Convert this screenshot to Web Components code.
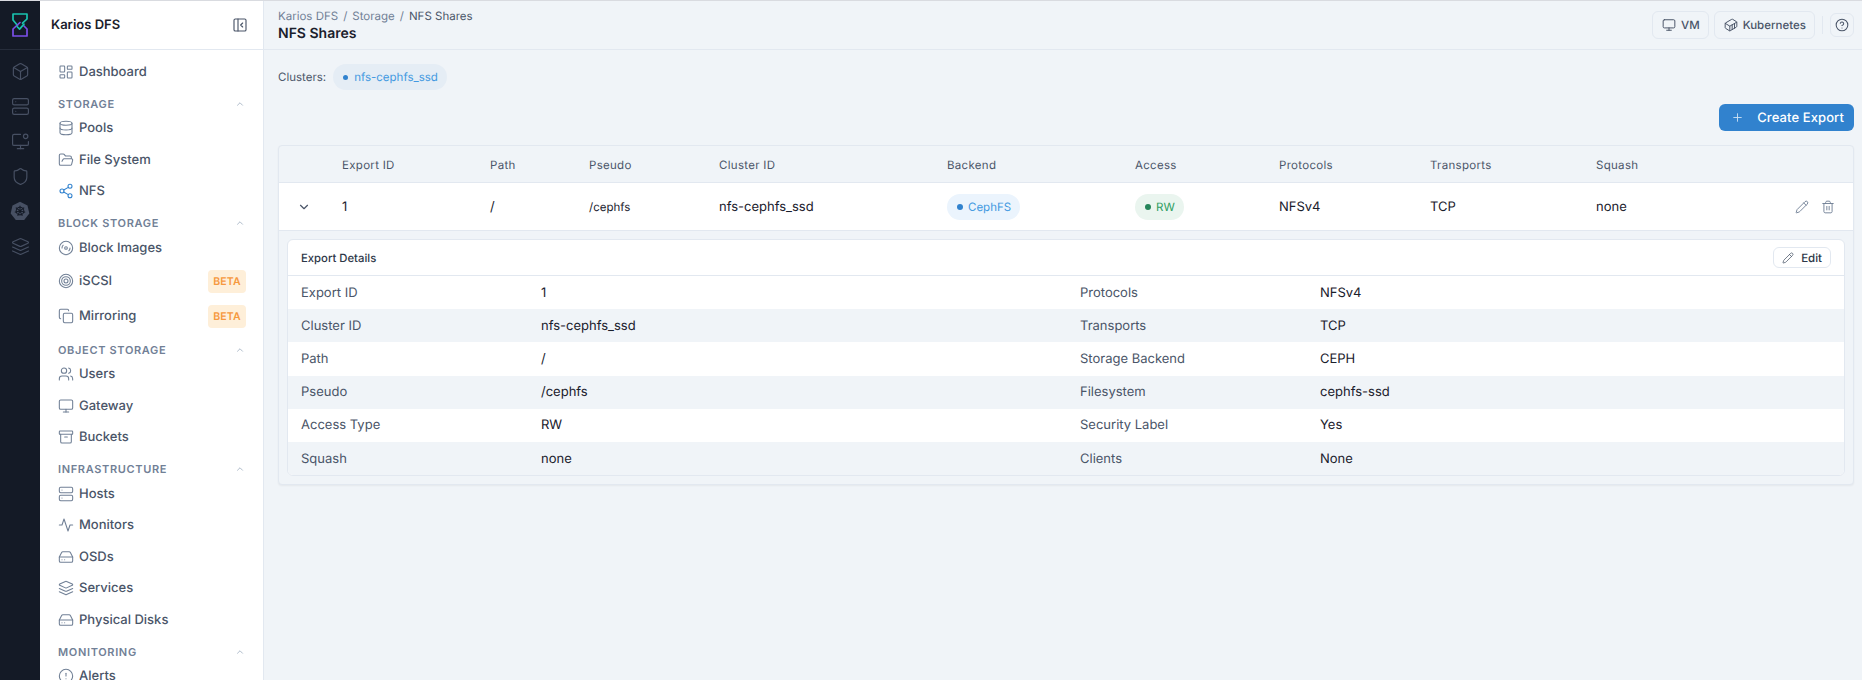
<!DOCTYPE html>
<html lang="en">
<head>
<meta charset="utf-8">
<title>NFS Shares</title>
<style>
  html, body { margin: 0; height: 100%; overflow: hidden; background: #f0f4f8; }
  body { font-family: Inter, "Liberation Sans", sans-serif; color: #1a202c; text-rendering: geometricPrecision; }
</style>
</head>
<body>
<kd-app>
  <kd-rail slot="rail"></kd-rail>
  <kd-sidebar slot="sidebar" title="Karios DFS">
    <kd-item icon="dashboard">Dashboard</kd-item>
    <kd-section>Storage</kd-section>
    <kd-item icon="database">Pools</kd-item>
    <kd-item icon="folder">File System</kd-item>
    <kd-item icon="share" active>NFS</kd-item>
    <kd-section>Block Storage</kd-section>
    <kd-item icon="disc">Block Images</kd-item>
    <kd-item icon="target" badge="BETA">iSCSI</kd-item>
    <kd-item icon="copy" badge="BETA">Mirroring</kd-item>
    <kd-section>Object Storage</kd-section>
    <kd-item icon="users">Users</kd-item>
    <kd-item icon="monitor">Gateway</kd-item>
    <kd-item icon="archive">Buckets</kd-item>
    <kd-section>Infrastructure</kd-section>
    <kd-item icon="server">Hosts</kd-item>
    <kd-item icon="activity">Monitors</kd-item>
    <kd-item icon="drive">OSDs</kd-item>
    <kd-item icon="layers">Services</kd-item>
    <kd-item icon="drive">Physical Disks</kd-item>
    <kd-section>Monitoring</kd-section>
    <kd-item icon="alert">Alerts</kd-item>
  </kd-sidebar>
  <kd-header slot="header" title="NFS Shares"></kd-header>
  <kd-clusters>nfs-cephfs_ssd</kd-clusters>
  <kd-toolbar>Create Export</kd-toolbar>
  <kd-exports>
    <kd-details title="Export Details">
      <kd-detail-row l1="Export ID" v1="1" l2="Protocols" v2="NFSv4"></kd-detail-row>
      <kd-detail-row striped l1="Cluster ID" v1="nfs-cephfs_ssd" l2="Transports" v2="TCP"></kd-detail-row>
      <kd-detail-row l1="Path" v1="/" l2="Storage Backend" v2="CEPH"></kd-detail-row>
      <kd-detail-row striped l1="Pseudo" v1="/cephfs" l2="Filesystem" v2="cephfs-ssd"></kd-detail-row>
      <kd-detail-row l1="Access Type" v1="RW" l2="Security Label" v2="Yes"></kd-detail-row>
      <kd-detail-row striped l1="Squash" v1="none" l2="Clients" v2="None"></kd-detail-row>
    </kd-details>
  </kd-exports>
</kd-app>

<script>
  const ICONS = {
    box: '<path d="M21 8a2 2 0 0 0-1-1.73l-7-4a2 2 0 0 0-2 0l-7 4A2 2 0 0 0 3 8v8a2 2 0 0 0 1 1.73l7 4a2 2 0 0 0 2 0l7-4A2 2 0 0 0 21 16Z"/><path d="m3.3 7 8.7 5 8.7-5"/><path d="M12 22V12"/>',
    server: '<rect x="2" y="2" width="20" height="8" rx="2"/><rect x="2" y="14" width="20" height="8" rx="2"/><path d="M6 6h.01"/><path d="M6 18h.01"/>',
    monitorcog: '<path d="M12 3H4a2 2 0 0 0-2 2v10a2 2 0 0 0 2 2h16a2 2 0 0 0 2-2v-3"/><circle cx="18.5" cy="5.5" r="2.8"/><path d="M12 17v4"/><path d="M8 21h8"/>',
    shield: '<path d="M20 13c0 5-3.5 7.5-7.66 8.95a1 1 0 0 1-.67-.01C7.5 20.5 4 18 4 13V6a1 1 0 0 1 1-1c2 0 4.5-1.2 6.24-2.72a1.17 1.17 0 0 1 1.52 0C14.51 3.81 17 5 19 5a1 1 0 0 1 1 1z"/>',
    layers: '<path d="M12.83 2.18a2 2 0 0 0-1.66 0L2.6 6.08a1 1 0 0 0 0 1.83l8.58 3.91a2 2 0 0 0 1.66 0l8.58-3.9a1 1 0 0 0 0-1.83Z"/><path d="m22 17.65-9.17 4.16a2 2 0 0 1-1.66 0L2 17.65"/><path d="m22 12.65-9.17 4.16a2 2 0 0 1-1.66 0L2 12.65"/>',
    dashboard: '<rect x="3" y="3" width="7" height="9" rx="1"/><rect x="14" y="3" width="7" height="5" rx="1"/><rect x="14" y="12" width="7" height="9" rx="1"/><rect x="3" y="16" width="7" height="5" rx="1"/>',
    database: '<ellipse cx="12" cy="5" rx="9" ry="3"/><path d="M3 5v14a9 3 0 0 0 18 0V5"/><path d="M3 12a9 3 0 0 0 18 0"/>',
    folder: '<path d="m6 14 1.5-2.9A2 2 0 0 1 9.24 10H20a2 2 0 0 1 1.94 2.5l-1.54 6a2 2 0 0 1-1.95 1.5H4a2 2 0 0 1-2-2V5a2 2 0 0 1 2-2h3.9a2 2 0 0 1 1.69.9l.81 1.2a2 2 0 0 0 1.67.9H18a2 2 0 0 1 2 2v2"/>',
    share: '<circle cx="18" cy="5" r="3"/><circle cx="6" cy="12" r="3"/><circle cx="18" cy="19" r="3"/><path d="m8.59 13.51 6.83 3.98"/><path d="m15.41 6.51-6.82 3.98"/>',
    disc: '<circle cx="12" cy="12" r="10"/><path d="M6 12c0-1.7.7-3.2 1.8-4.2"/><circle cx="12" cy="12" r="2"/><path d="M18 12c0 1.7-.7 3.2-1.8 4.2"/>',
    target: '<circle cx="12" cy="12" r="10"/><circle cx="12" cy="12" r="6.5"/><circle cx="12" cy="12" r="3"/>',
    copy: '<rect x="8" y="8" width="14" height="14" rx="2"/><path d="M4 16c-1.1 0-2-.9-2-2V4c0-1.1.9-2 2-2h10c1.1 0 2 .9 2 2"/>',
    users: '<path d="M16 21v-2a4 4 0 0 0-4-4H6a4 4 0 0 0-4 4v2"/><circle cx="9" cy="7" r="4"/><path d="M22 21v-2a4 4 0 0 0-3-3.87"/><path d="M16 3.13a4 4 0 0 1 0 7.75"/>',
    monitor: '<rect x="2" y="3" width="20" height="14" rx="2"/><path d="M8 21h8"/><path d="M12 17v4"/>',
    archive: '<rect x="2" y="3" width="20" height="5" rx="1"/><path d="M4 8v11a2 2 0 0 0 2 2h12a2 2 0 0 0 2-2V8"/><path d="M10 12h4"/>',
    activity: '<path d="M22 12h-4l-3 9L9 3l-3 9H2"/>',
    drive: '<path d="M22 12H2"/><path d="M5.45 5.11 2 12v6a2 2 0 0 0 2 2h16a2 2 0 0 0 2-2v-6l-3.45-6.89A2 2 0 0 0 16.76 4H7.24a2 2 0 0 0-1.79 1.11z"/><path d="M6 16h.01"/><path d="M10 16h.01"/>',
    alert: '<circle cx="12" cy="12" r="10"/><path d="M12 8v4"/><path d="M12 16h.01"/>',
    up: '<path d="m18 15-6-6-6 6"/>',
    down: '<path d="m6 9 6 6 6-6"/>',
    plus: '<path d="M5 12h14"/><path d="M12 5v14"/>',
    pencil: '<path d="M21.174 6.812a1 1 0 0 0-3.986-3.987L3.842 16.174a2 2 0 0 0-.5.83l-1.321 4.352a.5.5 0 0 0 .623.622l4.353-1.32a2 2 0 0 0 .83-.497z"/><path d="m15 5 4 4"/>',
    trash: '<path d="M3 6h18"/><path d="M19 6v14c0 1-1 2-2 2H7c-1 0-2-1-2-2V6"/><path d="M8 6V4c0-1 1-2 2-2h4c1 0 2 1 2 2v2"/><path d="M10 11v6"/><path d="M14 11v6"/>',
    help: '<circle cx="12" cy="12" r="10"/><path d="M9.09 9a3 3 0 0 1 5.83 1c0 2-3 3-3 3"/><path d="M12 17h.01"/>',
    panel: '<rect x="3" y="3" width="18" height="18" rx="2"/><path d="M9 3v18"/><path d="m16 15-3-3 3-3"/>',
    container: '<path d="M22 7.7c0-.6-.4-1.2-.8-1.5l-6.3-3.9a1.72 1.72 0 0 0-1.7 0l-10.3 6c-.5.2-.9.8-.9 1.4v6.6c0 .5.4 1.2.8 1.5l6.3 3.9a1.72 1.72 0 0 0 1.7 0l10.3-6c.5-.3.9-1 .9-1.5Z"/><path d="M10 21.9V14L2.1 9.1"/><path d="m10 14 11.9-6.9"/><path d="M14 19.8v-8.1"/><path d="M18 17.5V9.4"/>'
  };

  function icon(name, size, width = 2) {
    return `<svg width="${size}" height="${size}" viewBox="0 0 24 24" fill="none" stroke="currentColor" stroke-width="${width}" stroke-linecap="round" stroke-linejoin="round" style="display:block;flex:none">${ICONS[name]}</svg>`;
  }

  class KdApp extends HTMLElement {
    constructor() {
      super();
      this.attachShadow({ mode: "open" }).innerHTML = `
      <style>
        :host { display: grid; grid-template-columns: 40px 224px 1fr; height: 680px; box-sizing: border-box; border-top: 1px solid #d9dbe0; overflow: hidden; }
        main { display: flex; flex-direction: column; min-width: 0; background: #f0f4f8; }
        .content { display: flex; flex-direction: column; gap: 14px; padding: 14px 8px 0 14px; }
      </style>
      <slot name="rail"></slot>
      <slot name="sidebar"></slot>
      <main>
        <slot name="header"></slot>
        <div class="content"><slot></slot></div>
      </main>`;
    }
  }

  class KdRail extends HTMLElement {
    constructor() {
      super();
      const items = ["box", "server", "monitorcog", "shield", "k8s", "layers"];
      const wheel = [0, 51.4, 102.8, 154.2, 205.6, 257, 308.4]
        .map(a => `<path d="M12 12V5.6" transform="rotate(${a} 12 12)"/>`).join("");
      const k8s = `<svg width="20" height="20" viewBox="0 0 24 24" style="display:block;flex:none"><path d="M12 1 21 5.3 23.2 15 17 22.8H7L.8 15 3 5.3z" fill="#475063"/><g fill="none" stroke="#141a26" stroke-width="1.3"><circle cx="12" cy="12" r="4.6"/>${wheel}</g></svg>`;
      this.attachShadow({ mode: "open" }).innerHTML = `
      <style>
        :host { display: flex; flex-direction: column; background: #141a26; color: #475063; }
        .logo { height: 48px; flex: none; display: flex; align-items: center; justify-content: center; border-bottom: 1px solid #262d3b; }
        nav { display: flex; flex-direction: column; align-items: center; padding-top: 11.5px; gap: 16px; }
        nav span { height: 19px; width: 22px; display: flex; justify-content: center; align-items: center; }
      </style>
      <div class="logo">
        <svg width="16" height="24" viewBox="0 0 16 24" fill="none" stroke-width="1.7" stroke-linejoin="round" stroke-linecap="round">
          <path d="M1 1h14v5l-4.5 4.2M5.5 12.5 1 7V1" stroke="#19c2ae"/>
          <path d="M8 9.5 1 16v7h14v-7l-3-3" stroke="#7a4fe8"/>
          <path d="m5 13.5 2.6 2.6 4.4-5" stroke="#19c2ae"/>
        </svg>
      </div>
      <nav>${items.map(n => `<span>${n === "k8s" ? k8s : icon(n, 19, 1.5)}</span>`).join("")}</nav>`;
    }
  }

  class KdSidebar extends HTMLElement {
    constructor() {
      super();
      const shadow = this.attachShadow({ mode: "open" });
      shadow.innerHTML = `
      <style>
        :host { display: flex; flex-direction: column; background: #fff; border-right: 1px solid #e2e8f0; overflow: hidden; }
        header { height: 48px; flex: none; display: flex; align-items: center; justify-content: space-between; padding: 0 15px 0 11px; border-bottom: 1px solid #e2e8f0; }
        h1 { margin: 0; font-size: 13px; font-weight: 600; color: #1a202c; }
        header span { color: #4a5568; }
        .nav { padding: 6px 17px 0 18px; }
      </style>
      <header><h1></h1><span>${icon("panel", 16, 1.7)}</span></header>
      <div class="nav"><slot></slot></div>`;
      shadow.querySelector("h1").textContent = this.getAttribute("title");
    }
  }

  class KdSection extends HTMLElement {
    constructor() {
      super();
      this.attachShadow({ mode: "open" }).innerHTML = `
      <style>
        :host { display: flex; align-items: center; justify-content: space-between; height: 16px; margin: 8px 0 1px; font-size: 11px; font-weight: 600; letter-spacing: 0.66px; text-transform: uppercase; color: #718096; }
        span { display: block; color: #a0aec0; margin-right: 1px; }
      </style>
      <slot></slot><span>${icon("up", 10, 2)}</span>`;
    }
  }

  class KdItem extends HTMLElement {
    constructor() {
      super();
      const badge = this.getAttribute("badge");
      this.attachShadow({ mode: "open" }).innerHTML = `
      <style>
        :host { display: flex; align-items: center; gap: 5px; min-height: 31.5px; font-size: 13px; font-weight: 500; color: #4a5568; }
        .ic { color: #718096; }
        :host([active]) .ic { color: #3182ce; }
        :host([badge]) { min-height: 35px; }
        .label { flex: 1; }
        .badge { background: #feefd9; color: #f6993f; font-size: 10.5px; font-weight: 600; letter-spacing: 0.2px; border-radius: 4px; width: 38px; height: 23px; display: flex; align-items: center; justify-content: center; }
      </style>
      <span class="ic">${icon(this.getAttribute("icon"), 16, 1.6)}</span>
      <span class="label"><slot></slot></span>
      ${badge ? `<span class="badge">${badge}</span>` : ""}`;
    }
  }

  class KdHeader extends HTMLElement {
    constructor() {
      super();
      const shadow = this.attachShadow({ mode: "open" });
      shadow.innerHTML = `
      <style>
        :host { display: flex; align-items: center; justify-content: space-between; height: 48px; flex: none; padding: 0 8px 0 14px; border-bottom: 1px solid #e2e8f0; background: #f0f4f8; }
        .crumbs { font-size: 11.5px; line-height: 16px; color: #718096; display: flex; gap: 5px; }
        .crumbs b { font-weight: 400; color: #4a5568; }
        h2 { margin: 1px 0 0; font-size: 14px; line-height: 18px; font-weight: 600; color: #1a202c; }
        .right { display: flex; align-items: center; gap: 5px; }
        button { font: 500 11.5px Inter, "Liberation Sans", sans-serif; text-rendering: inherit; color: #4a5568; background: #f0f4f8; border: 1px solid #e2e8f0; border-radius: 6px; height: 28px; padding: 0 8px 0 9px; display: flex; align-items: center; gap: 5px; }
        .sep { width: 1px; height: 18px; background: #e2e8f0; margin: 0 2px; }
        .help { width: 24px; height: 24px; padding: 0; justify-content: center; }
      </style>
      <div>
        <div class="crumbs"><span>Karios DFS</span><span>/</span><span>Storage</span><span>/</span><b>NFS Shares</b></div>
        <h2></h2>
      </div>
      <div class="right">
        <button>${icon("monitor", 14, 1.7)}VM</button>
        <button>${icon("container", 14, 1.7)}Kubernetes</button>
        <span class="sep"></span>
        <button class="help">${icon("help", 14, 1.8)}</button>
      </div>`;
      shadow.querySelector("h2").textContent = this.getAttribute("title");
    }
  }

  class KdPill extends HTMLElement {
    constructor() {
      super();
      this.attachShadow({ mode: "open" }).innerHTML = `
      <style>
        :host { display: inline-flex; align-items: center; gap: var(--gap, 6px); height: 26px; padding: 0 9px 0 10px; border-radius: 13px; font-size: 11.5px; background: var(--pill-bg, #ebf8ff); color: var(--pill-fg, #4299e1); white-space: nowrap; }
        i { width: var(--dot, 5px); height: var(--dot, 5px); border-radius: 50%; background: var(--pill-dot, #3182ce); }
      </style>
      <i></i><slot></slot>`;
    }
  }

  class KdClusters extends HTMLElement {
    constructor() {
      super();
      this.attachShadow({ mode: "open" }).innerHTML = `
      <style>
        :host { display: flex; align-items: center; gap: 7px; font-size: 11.5px; color: #4a5568; }
        kd-pill { --pill-bg: #e5edf5; }
      </style>
      Clusters: <kd-pill><slot></slot></kd-pill>`;
    }
  }

  class KdToolbar extends HTMLElement {
    constructor() {
      super();
      this.attachShadow({ mode: "open" }).innerHTML = `
      <style>
        :host { display: flex; justify-content: flex-end; }
        button { font: 500 13px Inter, "Liberation Sans", sans-serif; text-rendering: inherit; color: #fff; background: #3182ce; border: 0; border-radius: 6px; height: 27px; padding: 0 10px 0 12px; display: flex; align-items: center; gap: 13px; letter-spacing: .1px; }
        svg { opacity: .75; }
      </style>
      <button>${icon("plus", 13, 1.7)}<slot></slot></button>`;
    }
  }

  class KdExports extends HTMLElement {
    constructor() {
      super();
      this.attachShadow({ mode: "open" }).innerHTML = `
      <style>
        :host { display: block; border: 1px solid #e2e8f0; border-radius: 4px; background: #f0f4f8; box-shadow: 0 1px 2px rgba(0, 0, 0, .05); }
        .row { display: grid; grid-template-columns: 63px 148px 99px 130px 228px 188px 144px 151px 166px 1fr; align-items: center; }
        .head { height: 35px; padding-top: 1px; font-size: 11.5px; letter-spacing: .3px; color: #4a5568; border-bottom: 1px solid #e2e8f0; }
        .data { height: 47px; background: #fff; font-size: 13px; color: #1a202c; border-bottom: 1px solid #e2e8f0; }
        .chev { color: #4a5568; padding-left: 18px; }
        .small { font-size: 11.5px; }
        .pill { display: flex; }
        .pill kd-pill { --dot: 6px; --gap: 5px; --pill-bg: #ebf4fd; height: 26px; }
        .pill .green { --pill-bg: #eaf5ef; --pill-fg: #2f9e62; --pill-dot: #25855a; }
        .actions { display: flex; justify-content: flex-end; gap: 12px; padding-right: 18px; color: #718096; }
        .panel { padding: 8px; }
      </style>
      <div class="row head">
        <span></span><span>Export ID</span><span>Path</span><span>Pseudo</span><span>Cluster ID</span><span>Backend</span><span>Access</span><span>Protocols</span><span>Transports</span><span>Squash</span>
      </div>
      <div class="row data">
        <span class="chev">${icon("down", 14, 2)}</span>
        <span>1</span><span>/</span><span class="small">/cephfs</span><span>nfs-cephfs_ssd</span>
        <span class="pill"><kd-pill>CephFS</kd-pill></span>
        <span class="pill"><kd-pill class="green">RW</kd-pill></span>
        <span>NFSv4</span><span>TCP</span>
        <div style="display:flex;justify-content:space-between;align-items:center">
          <span>none</span>
          <span class="actions">${icon("pencil", 14, 1.6)}${icon("trash", 14, 1.6)}</span>
        </div>
      </div>
      <div class="panel"><slot></slot></div>`;
    }
  }

  class KdDetails extends HTMLElement {
    constructor() {
      super();
      const shadow = this.attachShadow({ mode: "open" });
      shadow.innerHTML = `
      <style>
        :host { display: block; background: #fff; border: 1px solid #e2e8f0; border-radius: 6px; overflow: hidden; }
        header { height: 35px; display: flex; align-items: center; justify-content: space-between; padding: 0 13px; border-bottom: 1px solid #e2e8f0; }
        h3 { margin: 1px 0 0; font-size: 11.3px; font-weight: 500; color: #2d3748; }
        button { font: 500 11.5px Inter, "Liberation Sans", sans-serif; text-rendering: inherit; color: #2d3748; background: #fff; border: 1px solid #e2e8f0; border-radius: 6px; height: 21px; padding: 0 8px; display: flex; align-items: center; gap: 7px; }
        button span { color: #4a5568; }
      </style>
      <header><h3></h3><button><span>${icon("pencil", 12, 1.5)}</span>Edit</button></header>
      <slot></slot>`;
      shadow.querySelector("h3").textContent = this.getAttribute("title");
    }
  }

  class KdDetailRow extends HTMLElement {
    constructor() {
      super();
      const shadow = this.attachShadow({ mode: "open" });
      shadow.innerHTML = `
      <style>
        :host { display: grid; grid-template-columns: 253px 539px 240px 1fr; align-items: center; height: 33.2px; font-size: 13px; background: #fff; }
        :host([striped]) { background: #f0f4f8; }
        span { color: #1a202c; }
        .l { color: #4a5568; padding-left: 13px; }
        .l2 { padding-left: 0; }
      </style>
      <span class="l"></span><span></span><span class="l l2"></span><span></span>`;
      const cells = shadow.querySelectorAll("span");
      ["l1", "v1", "l2", "v2"].forEach((a, i) => { cells[i].textContent = this.getAttribute(a); });
    }
  }

  customElements.define("kd-app", KdApp);
  customElements.define("kd-rail", KdRail);
  customElements.define("kd-sidebar", KdSidebar);
  customElements.define("kd-section", KdSection);
  customElements.define("kd-item", KdItem);
  customElements.define("kd-header", KdHeader);
  customElements.define("kd-pill", KdPill);
  customElements.define("kd-clusters", KdClusters);
  customElements.define("kd-toolbar", KdToolbar);
  customElements.define("kd-exports", KdExports);
  customElements.define("kd-details", KdDetails);
  customElements.define("kd-detail-row", KdDetailRow);
</script>
</body>
</html>
